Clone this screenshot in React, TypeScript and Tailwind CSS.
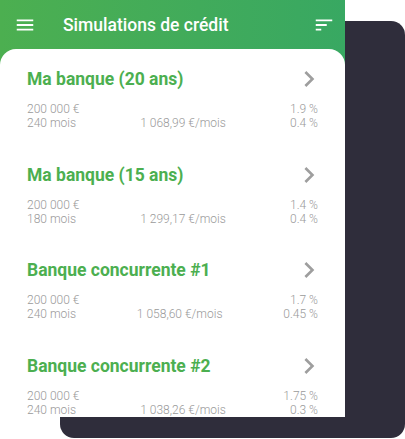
import React from "react";

const simulations = [
  { title: "Ma banque (20 ans)", amount: "200 000 €", months: "240 mois", monthly: "1 068,99 €/mois", rate: "1.9 %", insurance: "0.4 %" },
  { title: "Ma banque (15 ans)", amount: "200 000 €", months: "180 mois", monthly: "1 299,17 €/mois", rate: "1.4 %", insurance: "0.4 %" },
  { title: "Banque concurrente #1", amount: "200 000 €", months: "240 mois", monthly: "1 058,60 €/mois", rate: "1.7 %", insurance: "0.45 %" },
  { title: "Banque concurrente #2", amount: "200 000 €", months: "240 mois", monthly: "1 038,26 €/mois", rate: "1.75 %", insurance: "0.3 %" },
];

const MenuIcon = () => (
  <svg width="22" height="22" viewBox="0 0 24 24" fill="white">
    <path d="M3 18h18v-2H3v2zm0-5h18v-2H3v2zm0-7v2h18V6H3z" />
  </svg>
);

const SortIcon = () => (
  <svg width="22" height="22" viewBox="0 0 24 24" fill="white">
    <path d="M3 18h6v-2H3v2zM3 6v2h18V6H3zm0 7h12v-2H3v2z" />
  </svg>
);

const Chevron = () => (
  <svg width="32" height="32" viewBox="0 0 24 24" fill="#9e9e9e" className="-mr-[7px] shrink-0">
    <path d="M10 6L8.59 7.41 13.17 12l-4.58 4.59L10 18l6-6z" />
  </svg>
);

export default function App() {
  return (
    <div className="relative w-[405px] h-[439px] bg-white overflow-hidden font-['Roboto',sans-serif]">
      {/* dark card behind the phone */}
      <div className="absolute left-[60px] top-[21px] w-[345px] h-[417px] rounded-[14px] bg-[#2f2d3b]" />

      <div className="relative z-10 w-[345px] h-[417px] flex flex-col bg-linear-to-r from-[#4caf50] to-[#38a862]">
        <div className="h-[49px] flex items-center pl-[14px] pr-[10px]">
          <MenuIcon />
          <span className="ml-[27px] text-white text-[17.5px] font-medium leading-6">Simulations de crédit</span>
          <div className="ml-auto">
            <SortIcon />
          </div>
        </div>

        <div className="flex-1 bg-white rounded-t-[16px] overflow-hidden px-[27px] pt-[14px]">
          {simulations.map((s) => (
            <div key={s.title} className="h-[95.5px]">
              <div className="h-[32px] flex items-center justify-between">
                <span className="text-[17.5px] font-bold text-[#4caf50] leading-6">{s.title}</span>
                <Chevron />
              </div>
              <div className="mt-[7px] text-[12px] leading-[14px] font-light text-[#9a9a9a]">
                <div className="flex justify-between">
                  <span>{s.amount}</span>
                  <span>{s.rate}</span>
                </div>
                <div className="flex justify-between">
                  <span>{s.months}</span>
                  <span>{s.monthly}</span>
                  <span>{s.insurance}</span>
                </div>
              </div>
            </div>
          ))}
        </div>
      </div>
    </div>
  );
}
